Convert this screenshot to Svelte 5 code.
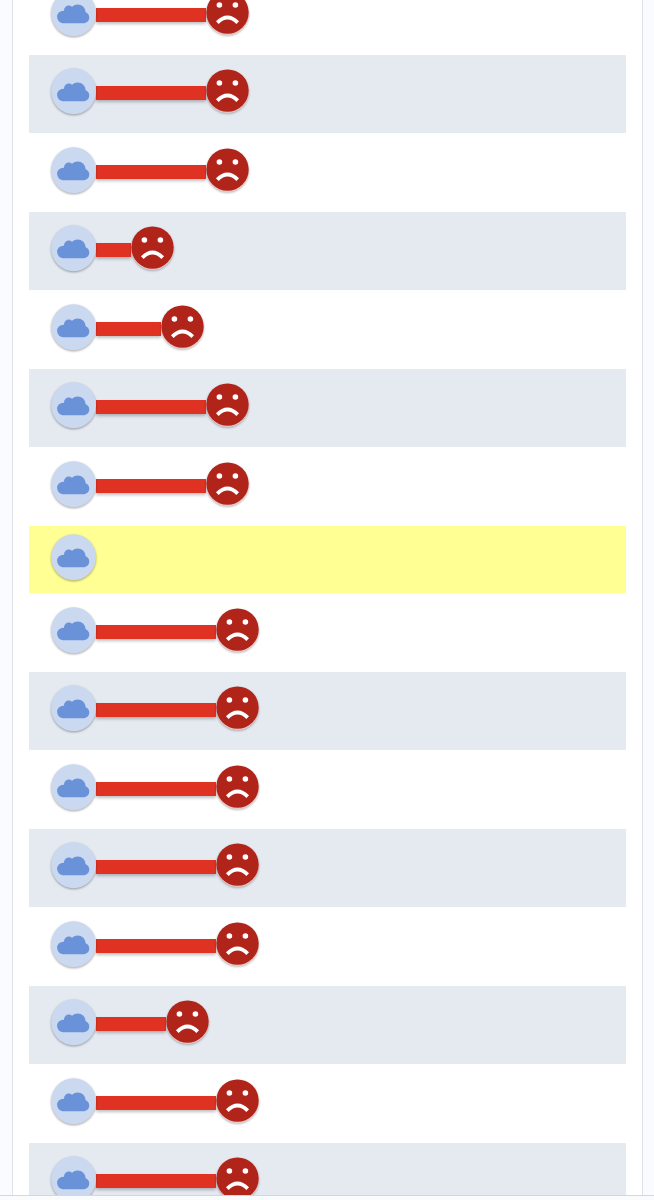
<script lang="ts">
  type Row = { id: number; length: number; highlighted?: boolean };

  const lengths = [110, 110, 110, 35, 65, 110, 110, 0, 120, 120, 120, 120, 120, 70, 120, 120];

  const rows: Row[] = lengths.map((length, id) => ({
    id,
    length,
    highlighted: length === 0,
  }));
</script>

<div class="page">
  <main class="viewport">
    <ul class="card">
      {#each rows as row (row.id)}
        <li class="row" class:highlighted={row.highlighted}>
          <svg class="cloud" viewBox="0 0 45 46" role="img" aria-label="Cloud">
            <ellipse cx="22.6" cy="23.2" rx="22.4" ry="23" fill="#cbd9f0" />
            <g fill="#6a92d9">
              <circle cx="12.3" cy="27" r="6.2" />
              <circle cx="17.8" cy="20.4" r="4.8" />
              <circle cx="26.7" cy="22.4" r="8" />
              <circle cx="32.6" cy="27.5" r="5.7" />
              <path d="M12.3 33.2V22l5-1h14l1.3 7v5.2z" />
            </g>
          </svg>
          {#if row.length > 0}
            <div class="bar" style="width: {row.length}px"></div>
            <svg class="face" viewBox="0 0 43 43" role="img" aria-label="Failed">
              <circle cx="21.5" cy="21.6" r="21.2" fill="#b1241a" />
              <circle cx="13.4" cy="14" r="2.8" fill="#fff" />
              <circle cx="29.4" cy="14" r="2.8" fill="#fff" />
              <path
                d="M11.3 31.6Q21.5 21.6 31.7 31.6"
                fill="none"
                stroke="#fff"
                stroke-width="3.8"
              />
            </svg>
          {/if}
        </li>
      {/each}
    </ul>
  </main>
  <footer class="footer"></footer>
</div>

<style>
  :global(body) {
    background: #f9fbfe;
    font-family: "Liberation Sans", sans-serif;
  }

  .page {
    display: flex;
    flex-direction: column;
    height: 100vh;
  }

  .viewport {
    flex: 1;
    min-height: 0;
    overflow: hidden;
  }

  /* the list is shown part-way scrolled */
  .card {
    list-style: none;
    margin: -24px 11px 0 12px;
    padding: 0 16px;
    background: #fff;
    border: 1px solid #dfe3e9;
    border-top: 0;
    border-bottom: 0;
  }

  .row {
    display: flex;
    align-items: flex-start;
    box-sizing: border-box;
    height: 79px;
    padding: 14px 22px 0;
  }

  .row:nth-child(even) {
    height: 78px;
    padding-top: 13px;
    background: #e5eaf1;
  }

  .row.highlighted:nth-child(even) {
    height: 67px;
    padding-top: 8px;
    background: #ffff94;
  }

  .cloud {
    flex: none;
    width: 45px;
    height: 46px;
    overflow: visible;
    filter: drop-shadow(0 1px 1px rgba(0, 0, 0, 0.35));
  }

  .bar {
    flex: none;
    height: 14px;
    margin-top: 18px;
    background: #df3223;
    box-shadow: 0 2px 3px rgba(0, 0, 0, 0.25);
  }

  .face {
    position: relative;
    flex: none;
    width: 43px;
    height: 43px;
    margin-top: 1px;
    overflow: visible;
    filter: drop-shadow(0 1px 0 #f0cfcd) drop-shadow(0 1px 1px rgba(0, 0, 0, 0.3));
  }

  .footer {
    flex: none;
    height: 4px;
    background: #f9fbfd;
    border-top: 1px solid #d3d8e0;
  }
</style>
